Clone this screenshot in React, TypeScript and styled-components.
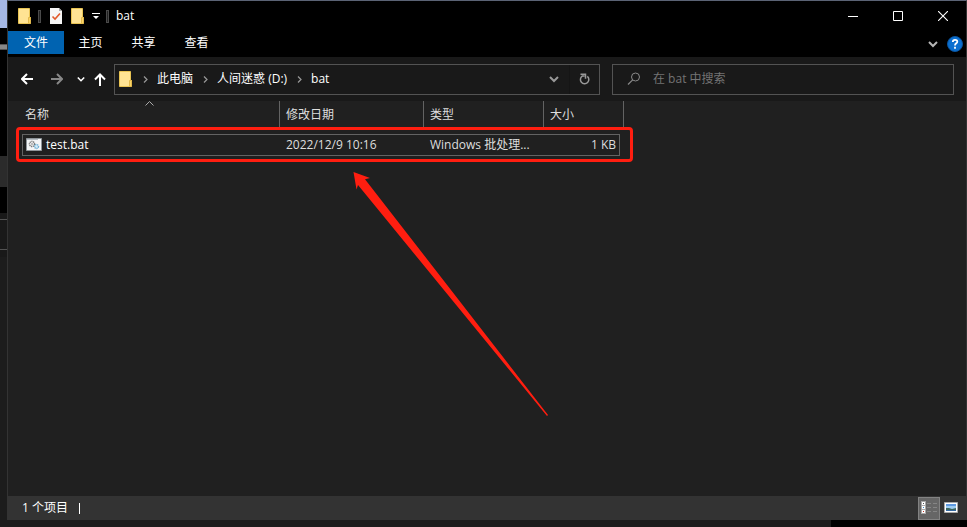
import React from "react";
import styled, { createGlobalStyle } from "styled-components";

const Global = createGlobalStyle`
  * { box-sizing: border-box; }
  body { margin: 0; background: #1c1c1c; }
  body, button, input { font-family: "Open Sans", "Noto Sans CJK SC", sans-serif; font-size: 12px; line-height: 16px; }
  button { border: 0; padding: 0; background: none; color: inherit; display: flex; align-items: center; justify-content: center; }
  svg { display: block; flex: none; }
`;

const Desktop = styled.div`
  display: grid;
  grid-template-columns: 7px 1fr;
  grid-template-rows: 1fr 7px;
  min-height: 100vh;
  overflow: hidden;
  color: #fff;
`;
const Behind = styled.div`
  display: flex;
  flex-direction: column;
  background: #1c1c1c;
`;
const Strip = styled.div<{ $h: number; $c: string }>`
  height: ${p => p.$h}px;
  background: ${p => p.$c};
`;
const Bottom = styled.div`
  grid-column: 1 / -1;
  display: grid;
  grid-template-columns: 1fr 136px;
  background: #1c1c1c;
`;
const BottomDark = styled.div`
  grid-column: 2;
  background: #000;
`;
const Window = styled.main`
  display: flex;
  flex-direction: column;
  min-width: 0;
  border: 1px solid #333;
  border-top-color: #5b6375;
  border-bottom: 0;
  background: #202020;
`;

const TitleBar = styled.header`
  display: flex;
  align-items: center;
  height: 30px;
  padding: 0 1px 0 10px;
  background: #000;
`;
const Quick = styled.div`
  display: flex;
  align-items: center;
  height: 30px;
  margin-right: 7px;
`;
const Divider = styled.span`
  width: 3px;
  height: 13px;
  margin-left: 6px;
  border: 1px solid #4a4a4a;
  background: #222;
`;
const QuickButton = styled.button`
  width: 14px;
  height: 18px;
  margin-left: 8px;
`;
const MoreButton = styled.button`
  width: 8px;
  height: 18px;
  margin-left: 7px;
`;
const Title = styled.h1`
  margin: 0;
  flex: 1;
  font-size: 12px;
  font-weight: 400;
  line-height: 16px;
`;
const Caption = styled.button`
  width: 45px;
  height: 28px;
`;

const Tabs = styled.nav`
  display: flex;
  align-items: flex-start;
  height: 26px;
  background: #000;
`;
const Tab = styled.button<{ $primary?: boolean }>`
  width: ${p => (p.$primary ? 56 : 53)}px;
  height: 23px;
  padding-top: 1px;
  background: ${p => (p.$primary ? "#0063b1" : "transparent")};
`;
const TabSpace = styled.div`
  flex: 1;
`;
const TabTool = styled.button`
  width: 22px;
  height: 26px;
`;

const Address = styled.div`
  display: flex;
  align-items: center;
  height: 44px;
  padding: 0 12px 0 8px;
  background: #191919;
`;
const Nav = styled.button<{ $w: number }>`
  width: ${p => p.$w}px;
  height: 30px;
`;
const PathBox = styled.div`
  display: flex;
  align-items: center;
  flex: 486 1 486px;
  min-width: 0;
  height: 31px;
  margin-right: 12px;
  padding-left: 4px;
  border: 1px solid #535353;
`;
const Sep = styled.span`
  display: flex;
  justify-content: center;
  width: 24px;
`;
const Crumb = styled.button`
  white-space: nowrap;
`;
const PathEnd = styled.div`
  display: flex;
  height: 29px;
  margin-left: auto;
`;
const PathButton = styled.button`
  width: 30px;
  height: 29px;
  & + & { border-left: 1px solid #151515; }
`;
const Search = styled.label`
  display: flex;
  align-items: center;
  flex: 342 1 342px;
  min-width: 0;
  height: 31px;
  padding-left: 14px;
  gap: 12px;
  border: 1px solid #535353;
`;
const SearchInput = styled.input`
  flex: 1;
  min-width: 0;
  padding: 0;
  border: 0;
  outline: 0;
  background: transparent;
  color: #ddd;
  &::placeholder { color: #747474; opacity: 1; }
`;

const Files = styled.section`
  position: relative;
  flex: 1;
  padding-left: 8px;
`;
const Table = styled.table`
  table-layout: fixed;
  width: 608px;
  border-collapse: separate;
  border-spacing: 0;
`;
const Col = styled.col<{ $w: number }>`
  width: ${p => p.$w}px;
`;
const Head = styled.th`
  position: relative;
  height: 27px;
  padding: 0 6px;
  border-right: 1px solid #636363;
  color: #dedede;
  font-weight: 400;
  text-align: left;
  &:first-child { padding-left: 9px; }
`;
const SortMark = styled.span`
  position: absolute;
  top: 0;
  left: 129px;
`;
const Cell = styled.td<{ $end?: boolean }>`
  height: 33px;
  padding: 0 6px;
  overflow: hidden;
  color: #dedede;
  text-align: ${p => (p.$end ? "right" : "left")};
  text-overflow: ellipsis;
  white-space: nowrap;
`;
const SizeCell = styled(Cell)`
  padding-right: 8px;
`;
const FileName = styled.span`
  display: flex;
  align-items: center;
  gap: 4px;
  padding-left: 4px;
  color: #fff;
`;
const Focus = styled.div`
  position: absolute;
  top: 33px;
  left: 14px;
  width: 598px;
  height: 22px;
  border: 1px solid #636363;
  pointer-events: none;
`;
const Marker = styled.div`
  position: absolute;
  top: 26px;
  left: 8px;
  width: 617px;
  height: 35px;
  border: 3px solid #ff1e10;
  border-radius: 4px;
  pointer-events: none;
`;
const Arrow = styled.svg`
  position: absolute;
  top: 70px;
  left: 345px;
`;

const Status = styled.footer`
  display: flex;
  align-items: center;
  height: 24px;
  padding: 0 4px 0 14px;
  background: #333;
`;
const Count = styled.span`
  flex: 1;
  display: flex;
  align-items: center;
  gap: 11px;
`;
const Caret = styled.span`
  width: 1px;
  height: 11px;
  background: #fff;
`;
const ViewButton = styled.button<{ $on?: boolean }>`
  width: 22px;
  height: 23px;
  padding-bottom: 2px;
  border: ${p => (p.$on ? "1px solid #838383" : "0")};
  background: ${p => (p.$on ? "#666" : "transparent")};
`;

const Folder = () => (
  <svg width="14" height="17" viewBox="0 0 14 17">
    <path d="M.5.5h11v9h1v6H.5z" fill="#ffe393" stroke="#e9c453" />
    <path d="M10.500 15V9.500h2v5.500l-1.500.8z" fill="#f9d568" stroke="#e3b84b" />
  </svg>
);
const CheckedPage = () => (
  <svg width="12" height="16" viewBox="0 0 12 16">
    <path d="M0 0h9l3 3v13H0z" fill="#f6f6f6" />
    <path d="M9 0v3h3z" fill="#aaa" />
    <path d="M2.500 8.500 5 11l5-5.500" fill="none" stroke="#e25a2b" strokeWidth="1.6" />
  </svg>
);
const Back = ({ c = "#fff", flip = false }) => (
  <svg width="12" height="12" viewBox="0 0 12 12">
    <path d={flip ? "M0 6h11M6 1l5 5-5 5" : "M12 6H1M6 1 1 6l5 5"} fill="none" stroke={c} strokeWidth="2" />
  </svg>
);
const Up = () => (
  <svg width="12" height="13" viewBox="0 0 12 13">
    <path d="M6 13V1.500M1 6.500l5-5 5 5" fill="none" stroke="#fff" strokeWidth="2" />
  </svg>
);
const Down = ({ w = 10, c = "#999" }) => (
  <svg width={w} height="7" viewBox="0 0 10 7">
    <path d="m1 1 4 4 4-4" fill="none" stroke={c} strokeWidth="2" />
  </svg>
);
const Chevron = () => (
  <svg width="5" height="7" viewBox="0 0 5 7">
    <path d="m1 .5 3 3-3 3" fill="none" stroke="#999" strokeWidth="1.2" />
  </svg>
);
const Refresh = () => (
  <svg width="11" height="12" viewBox="0 0 11 12">
    <path d="M8.300 3.300A4.200 4.200 0 1 1 3.200 3.100L5.500 3M1.500 1.300h5v4.500" fill="none" stroke="#999" strokeWidth="1.5" />
  </svg>
);
const Lens = () => (
  <svg width="14" height="14" viewBox="0 0 14 14">
    <circle cx="8.500" cy="5" r="4" fill="none" stroke="#8a8a8a" />
    <path d="M5.700 7.800 1 12.500" stroke="#8a8a8a" strokeWidth="1.2" />
  </svg>
);
const BatchFile = () => (
  <svg width="16" height="13" viewBox="0 0 16 13">
    <path d="M.5.5h15v12H.5z" fill="#f4f5f6" stroke="#8e9499" />
    <path d="M1 1h11v1H1z" fill="#b7bdc3" />
    <circle cx="6" cy="6" r="2.500" fill="none" stroke="#777" strokeWidth="1.5" strokeDasharray="1.2 .6" />
    <circle cx="6" cy="6" r=".8" fill="#777" />
    <circle cx="10.500" cy="8.500" r="2" fill="#d6ecf8" stroke="#6faed2" strokeWidth="1.4" strokeDasharray="1.2 .6" />
  </svg>
);
const Details = () => (
  <svg width="16" height="13" viewBox="0 0 16 13">
    <path d="M0 0h5v13H0z" fill="#aaa" />
    <path d="M1 1h3v3H1zM1 5h3v3H1zM1 9h3v3H1z" fill="#fff" />
    <path d="M2 2h1v1H2z" fill="#555" />
    <path d="M2 6h1v1H2z" fill="#3988c8" />
    <path d="M2 10h1v1H2z" fill="#c03428" />
    <path d="M6 2.500h4m2 0h4M6 6.500h4m2 0h4M6 10.500h4m2 0h4" stroke="#858585" />
  </svg>
);
const Thumbnail = () => (
  <svg width="14" height="11" viewBox="0 0 14 11">
    <path d="M.5.5h13v10H.5z" fill="#fff" stroke="#aaa" />
    <path d="M2 2h10v7H2z" fill="#9fcdf2" />
    <path d="M2 2h10v2H2z" fill="#5f9ae2" />
    <path d="M2 6h3l3 1 4-1v2H2z" fill="#3c665f" />
    <path d="M2 8h10v1H2z" fill="#3469a0" />
  </svg>
);

const behind: [number, string][] = [
  [28, "#a5b7e4"], [16, "#000"], [1, "#555"], [4, "#888"], [1, "#555"], [106, "#000"],
  [31, "#2b2b2b"], [26, "#000"], [6, "#191919"], [1, "#535353"], [29, "#191919"],
  [1, "#535353"], [7, "#191919"],
];

export default function App() {
  return (
    <Desktop>
      <Global />
      <Behind>{behind.map(([h, c], i) => <Strip key={i} $h={h} $c={c} />)}</Behind>
      <Window>
        <TitleBar>
          <Quick>
            <Folder />
            <Divider />
            <QuickButton aria-label="属性"><CheckedPage /></QuickButton>
            <QuickButton aria-label="新建文件夹"><Folder /></QuickButton>
            <MoreButton aria-label="自定义快速访问工具栏">
              <svg width="8" height="7" viewBox="0 0 8 7">
                <path d="M0 0h8v1H0zM1 3h6L4 6z" fill="#fff" />
              </svg>
            </MoreButton>
            <Divider />
          </Quick>
          <Title>bat</Title>
          <Caption aria-label="最小化">
            <svg width="10" height="10" viewBox="0 0 10 10"><path d="M0 5.500h10" stroke="#fff" /></svg>
          </Caption>
          <Caption aria-label="最大化">
            <svg width="10" height="10" viewBox="0 0 10 10"><path d="M.5.5h9v9h-9z" fill="none" stroke="#fff" /></svg>
          </Caption>
          <Caption aria-label="关闭">
            <svg width="10" height="10" viewBox="0 0 10 10"><path d="m0 0 10 10M10 0 0 10" stroke="#fff" strokeWidth="1.1" /></svg>
          </Caption>
        </TitleBar>
        <Tabs>
          <Tab $primary>文件</Tab>
          <Tab>主页</Tab>
          <Tab>共享</Tab>
          <Tab>查看</Tab>
          <TabSpace />
          <TabTool aria-label="展开功能区"><Down c="#b5b5b5" /></TabTool>
          <TabTool aria-label="帮助">
            <svg width="16" height="16" viewBox="0 0 16 16">
              <circle cx="8" cy="8" r="7.500" fill="#0b6fd0" stroke="#0a539c" />
              <path d="M5.800 6c0-3 4.600-2.800 4.500-.3C10.200 7.400 8 7.200 8 9.400M8 10.700v2" fill="none" stroke="#fff" strokeWidth="1.8" />
            </svg>
          </TabTool>
        </Tabs>
        <Address>
          <Nav $w={22} aria-label="后退"><Back /></Nav>
          <Nav $w={38} aria-label="前进"><Back c="#888" flip /></Nav>
          <Nav $w={10} aria-label="最近浏览的位置"><Down w={8} c="#fff" /></Nav>
          <Nav $w={28} aria-label="上移"><Up /></Nav>
          <PathBox>
            <Folder />
            <Sep><Chevron /></Sep>
            <Crumb>此电脑</Crumb>
            <Sep><Chevron /></Sep>
            <Crumb>人间迷惑 (D:)</Crumb>
            <Sep><Chevron /></Sep>
            <Crumb>bat</Crumb>
            <PathEnd>
              <PathButton aria-label="以前的位置"><Down /></PathButton>
              <PathButton aria-label="刷新"><Refresh /></PathButton>
            </PathEnd>
          </PathBox>
          <Search>
            <Lens />
            <SearchInput type="search" aria-label="搜索" placeholder="在 bat 中搜索" />
          </Search>
        </Address>
        <Files>
          <Table>
            <colgroup><Col $w={264} /><Col $w={144} /><Col $w={120} /><Col $w={80} /></colgroup>
            <thead>
              <tr>
                <Head>
                  名称
                  <SortMark>
                    <svg width="9" height="5" viewBox="0 0 9 5"><path d="m.5 4.500 4-4 4 4" fill="none" stroke="#aaa" /></svg>
                  </SortMark>
                </Head>
                <Head>修改日期</Head>
                <Head>类型</Head>
                <Head>大小</Head>
              </tr>
            </thead>
            <tbody>
              <tr>
                <Cell><FileName><BatchFile />test.bat</FileName></Cell>
                <Cell>2022/12/9 10:16</Cell>
                <Cell>Windows 批处理...</Cell>
                <SizeCell $end>1 KB</SizeCell>
              </tr>
            </tbody>
          </Table>
          <Focus />
          <Marker />
          <Arrow width="196" height="247" viewBox="353 171 196 247" aria-hidden="true">
            <path d="M353.500 172 370 178l-5 1.200L548 415l-1 1L358 185l-1.500 4.500z" fill="#ff1e10" />
          </Arrow>
        </Files>
        <Status>
          <Count>1 个项目<Caret /></Count>
          <ViewButton $on aria-label="详细信息"><Details /></ViewButton>
          <ViewButton aria-label="大缩略图"><Thumbnail /></ViewButton>
        </Status>
      </Window>
      <Bottom><BottomDark /></Bottom>
    </Desktop>
  );
}
